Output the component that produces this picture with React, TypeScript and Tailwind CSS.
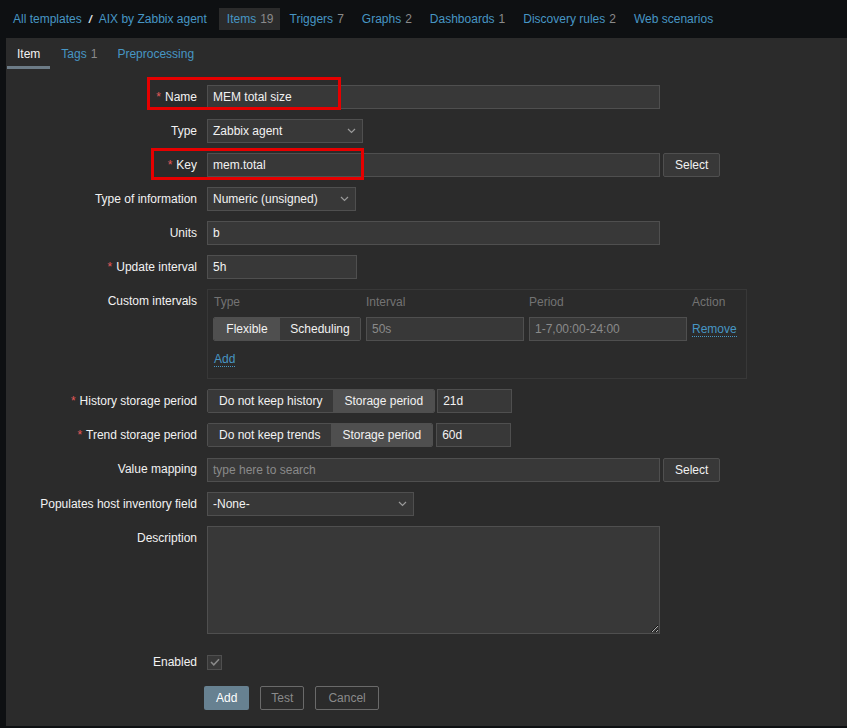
import React from 'react';

const font = { fontFamily: '"Liberation Sans", Arial, sans-serif' };

function Chevron() {
  return (
    <svg width="9" height="6" viewBox="0 0 9 6" className="shrink-0">
      <path d="M1 1l3.5 3.5L8 1" fill="none" stroke="#9a9a9a" strokeWidth="1.2" />
    </svg>
  );
}

function Label({ text, required }: { text: string; required?: boolean }) {
  return (
    <div className="text-right text-[#f2f2f2] leading-[24px]">
      {required && <span className="text-[#e45959] mr-[4px]">*</span>}
      {text}
    </div>
  );
}

function Input({ value, w, placeholder }: { value?: string; w: string; placeholder?: string }) {
  return (
    <div
      className={`${w} h-[24px] bg-[#383838] border border-[#4f4f4f] px-[5px] leading-[22px] ${
        placeholder ? 'text-[#8a8a8a]' : 'text-[#f2f2f2]'
      }`}
    >
      {value ?? placeholder}
    </div>
  );
}

function Select({ value, w }: { value: string; w: string }) {
  return (
    <div
      className={`${w} h-[24px] bg-[#383838] border border-[#4f4f4f] pl-[5px] pr-[6px] flex items-center justify-between text-[#f2f2f2]`}
    >
      <span>{value}</span>
      <Chevron />
    </div>
  );
}

function Btn({ text }: { text: string }) {
  return (
    <div className="h-[24px] px-[11px] ml-[3px] bg-[#383838] border border-[#4f4f4f] rounded-[2px] leading-[22px] text-[#f2f2f2]">
      {text}
    </div>
  );
}

function Segmented({ items, active }: { items: string[]; active: number }) {
  return (
    <div className="flex h-[24px] border border-[#4f4f4f] rounded-[2px] overflow-hidden">
      {items.map((it, i) => (
        <div
          key={it}
          className={`px-[11px] leading-[22px] text-[#f2f2f2] ${i === active ? 'bg-[#4f4f4f]' : 'bg-[#383838]'}`}
        >
          {it}
        </div>
      ))}
    </div>
  );
}

function Row({ children }: { children: React.ReactNode }) {
  return <div className="grid grid-cols-[191px_1fr] gap-x-[10px] items-start">{children}</div>;
}

export default function App() {
  const nav = [
    { t: 'Items', n: '19', active: true },
    { t: 'Triggers', n: '7' },
    { t: 'Graphs', n: '2' },
    { t: 'Dashboards', n: '1' },
    { t: 'Discovery rules', n: '2' },
    { t: 'Web scenarios' },
  ];

  return (
    <div style={font} className="relative w-[847px] h-[728px] bg-[#0e1012] text-[12px] overflow-hidden">
      {/* breadcrumbs / nav */}
      <div className="h-[38px] flex items-center pl-[13px]">
        <span className="text-[#4796c4]">All templates</span>
        <span className="text-[#e5e5e5] font-bold italic mx-[7px] text-[11px]">/</span>
        <span className="text-[#4796c4] mr-[12px]">AIX by Zabbix agent</span>
        {nav.map((n) => (
          <div
            key={n.t}
            className={`h-[22px] leading-[22px] ${n.active ? 'bg-[#2b2b2b] pl-[8px] pr-[6px]' : 'ml-[2px] px-[8px]'}`}
          >
            <span className="text-[#4796c4]">{n.t}</span>
            {n.n && <span className="text-[#8a8a8a] ml-[4px]">{n.n}</span>}
          </div>
        ))}
      </div>

      {/* panel */}
      <div className="ml-[6px] h-[688px] bg-[#2b2b2b]">
        <div className="flex h-[31px] items-stretch">
          <div className="px-[10px] flex items-center text-[#f2f2f2] border-b-[3px] border-[#6d7c87] pt-[3px] ml-[1px]">
            Item
          </div>
          <div className="pl-[11px] pr-[10px] flex items-center">
            <span className="text-[#4796c4]">Tags</span>
            <span className="text-[#8a8a8a] ml-[4px]">1</span>
          </div>
          <div className="px-[10px] flex items-center text-[#4796c4]">Preprocessing</div>
        </div>

        <div className="flex flex-col gap-[10px] pt-[16px]">
          <Row>
            <Label text="Name" required />
            <Input value="MEM total size" w="w-[453px]" />
          </Row>
          <Row>
            <Label text="Type" />
            <Select value="Zabbix agent" w="w-[156px]" />
          </Row>
          <Row>
            <Label text="Key" required />
            <div className="flex">
              <Input value="mem.total" w="w-[453px]" />
              <Btn text="Select" />
            </div>
          </Row>
          <Row>
            <Label text="Type of information" />
            <Select value="Numeric (unsigned)" w="w-[149px]" />
          </Row>
          <Row>
            <Label text="Units" />
            <Input value="b" w="w-[453px]" />
          </Row>
          <Row>
            <Label text="Update interval" required />
            <Input value="5h" w="w-[150px]" />
          </Row>
          <Row>
            <Label text="Custom intervals" />
            <div className="w-[540px] h-[90px] border border-[#383838] pl-[5px] pt-[5px]">
              <div className="grid grid-cols-[148px_158px_158px_auto] gap-x-[5px] text-[#737373] leading-[14px] h-[22px]">
                <div className="pl-[1px]">Type</div>
                <div>Interval</div>
                <div>Period</div>
                <div>Action</div>
              </div>
              <div className="grid grid-cols-[148px_158px_158px_auto] gap-x-[5px] items-center">
                <div className="flex h-[24px] border border-[#4f4f4f] rounded-[2px] overflow-hidden">
                  <div className="w-[66px] text-center leading-[22px] bg-[#4f4f4f] text-[#f2f2f2]">Flexible</div>
                  <div className="flex-1 text-center leading-[22px] bg-[#383838] text-[#f2f2f2]">Scheduling</div>
                </div>
                <div className="h-[24px] bg-[#383838] border border-[#4f4f4f] px-[5px] leading-[22px] text-[#8a8a8a]">
                  50s
                </div>
                <div className="h-[24px] bg-[#383838] border border-[#4f4f4f] px-[5px] leading-[22px] text-[#8a8a8a]">
                  1-7,00:00-24:00
                </div>
                <div className="text-[#4796c4] border-b border-dotted border-[#4796c4] leading-[14px] w-fit">
                  Remove
                </div>
              </div>
              <div className="mt-[9px] pl-[1px]">
                <span className="text-[#4796c4] border-b border-dotted border-[#4796c4] leading-[14px] inline-block">
                  Add
                </span>
              </div>
            </div>
          </Row>
          <Row>
            <Label text="History storage period" required />
            <div className="flex gap-[2px]">
              <Segmented items={['Do not keep history', 'Storage period']} active={1} />
              <Input value="21d" w="w-[75px]" />
            </div>
          </Row>
          <Row>
            <Label text="Trend storage period" required />
            <div className="flex gap-[3px]">
              <Segmented items={['Do not keep trends', 'Storage period']} active={1} />
              <Input value="60d" w="w-[75px]" />
            </div>
          </Row>
          <Row>
            <Label text="Value mapping" />
            <div className="flex mt-[1px]">
              <Input placeholder="type here to search" w="w-[453px]" />
              <Btn text="Select" />
            </div>
          </Row>
          <Row>
            <Label text="Populates host inventory field" />
            <Select value="-None-" w="w-[207px]" />
          </Row>
          <Row>
            <Label text="Description" />
            <textarea
              readOnly
              className="w-[453px] h-[108px] bg-[#383838] border border-[#4f4f4f] outline-none block"
            />
          </Row>
          <div className="grid grid-cols-[191px_1fr] gap-x-[10px] items-center mt-[6px]">
            <Label text="Enabled" />
            <div className="w-[15px] h-[15px] bg-[#383838] border border-[#4f4f4f] flex items-center justify-center">
              <svg width="10" height="8" viewBox="0 0 10 8">
                <path d="M1 4l2.8 2.8L9 1.2" fill="none" stroke="#8a8a8a" strokeWidth="1.5" />
              </svg>
            </div>
          </div>
          <div className="flex gap-[10px] ml-[198px] mt-[2px]">
            <div className="h-[24px] px-[12px] bg-[#678191] rounded-[2px] leading-[24px] text-white">Add</div>
            <div className="h-[24px] px-[10px] border border-[#6a6a6a] rounded-[2px] leading-[22px] text-[#8a8a8a] ml-[1px]">
              Test
            </div>
            <div className="h-[24px] px-[12px] border border-[#6a6a6a] rounded-[2px] leading-[22px] text-[#8a8a8a] ml-[1px]">
              Cancel
            </div>
          </div>
        </div>
      </div>

      {/* highlight boxes */}
      <div className="absolute left-[147px] top-[77px] w-[194px] h-[33px] border-[3px] border-[#e60000]" />
      <div className="absolute left-[151px] top-[148px] w-[213px] h-[32px] border-[3px] border-[#e60000]" />
    </div>
  );
}
